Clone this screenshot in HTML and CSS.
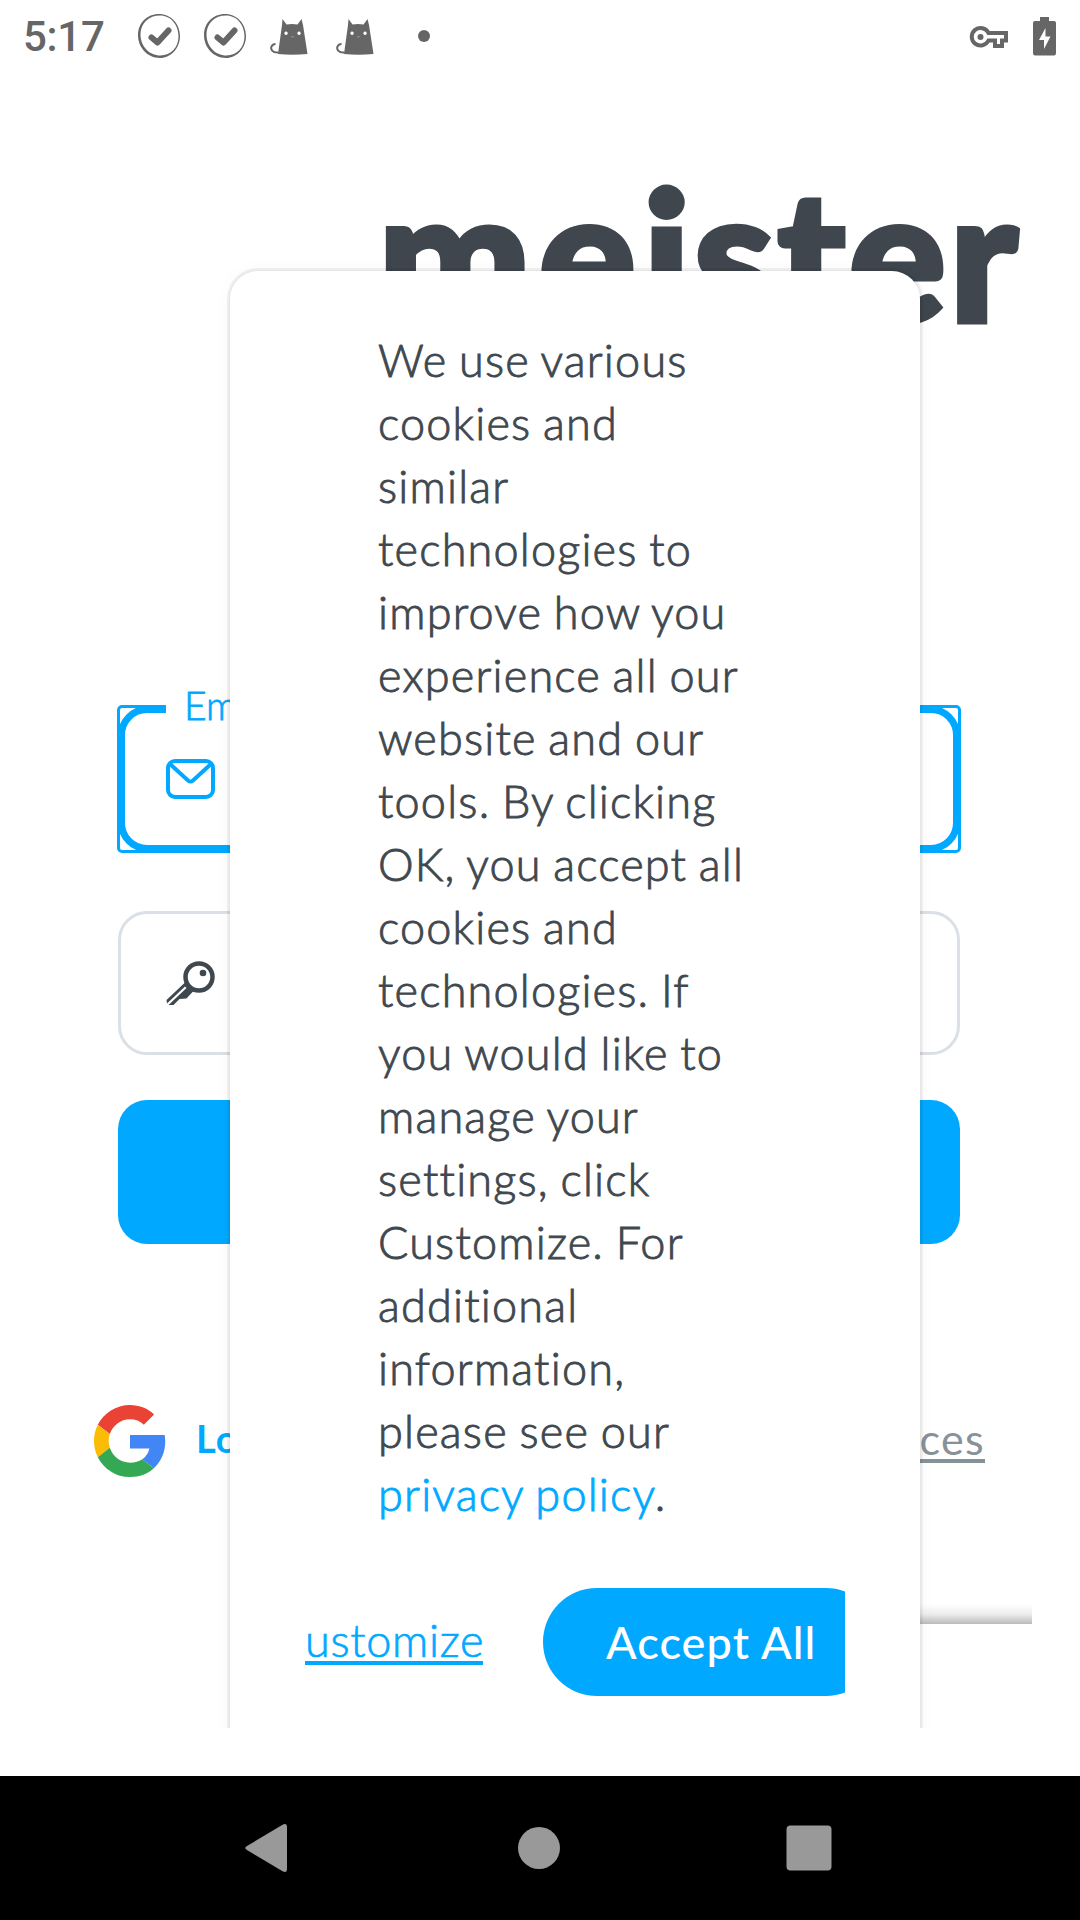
FILE: index.html
```html
<!DOCTYPE html>
<html lang="en">
<head>
<meta charset="utf-8">
<title>Meister login</title>
<link rel="stylesheet" href="styles.css">
</head>
<body>
<svg class="defs" width="0" height="0">
  <symbol id="check" viewBox="0 0 44 46">
    <path fill-rule="evenodd" d="M22 1C34 1 43 11 43 23S34 45 23 45C10 45 1 34 1 22 1 10 10 1 22 1ZM23 2.500C12 2.500 3.500 10 3.500 21.500 3.500 33 12 42.500 23.500 42.500 34 42.500 41.500 34 41.500 23.500 41.500 12 34 2.500 23 2.500Z"/>
    <path d="M14.500 24.500 20.500 29.500 31.500 17.500" fill="none" stroke="#666" stroke-width="6" stroke-linecap="round" stroke-linejoin="round"/>
  </symbol>
  <symbol id="cat" viewBox="0 0 38 37">
    <path fill-rule="evenodd" d="M12.500 1 16.500 6.500Q22 5.500 27.500 6.500L31.500 1 33 7 37.500 36Q22 37.500 8 36L12 7ZM16 13.500a1.700 1.700 0 1 0 .1 0ZM29 13.500a1.700 1.700 0 1 0 .1 0Z"/>
    <path d="M8.500 34.500C2 35 .5 31 1.500 28.500 2.500 26.500 4 26 5.500 26" fill="none" stroke="#666" stroke-width="2"/>
    <path d="M20.500 18.500h4l-2 1Z" fill="#aaa"/>
  </symbol>
</svg>

<header class="status">
  <span class="clock">5:17</span>
  <div class="notices">
    <svg class="check"><use href="#check"/></svg>
    <svg class="check"><use href="#check"/></svg>
    <svg class="cat"><use href="#cat"/></svg>
    <svg class="cat second"><use href="#cat"/></svg>
    <i class="dot"></i>
  </div>
  <svg class="vpn" viewBox="0 0 38 23"><path fill="none" stroke="#666" stroke-width="4" d="M18.500 7H36V14.500H32V20H25V14.500H18.500A8.800 8.800 0 1 1 18.500 7Z"/><circle cx="10.500" cy="11" r="3"/></svg>
  <svg class="battery" viewBox="0 0 23 39"><path fill-rule="evenodd" d="M7 0h9v4h5q2 0 2 2v30q0 2.500-2 2.500H2q-2 0-2-2.500V6q0-2 2-2h5ZM12.500 11 6 23h5v9l6.500-12.500h-5Z"/></svg>
</header>

<main class="page">
  <div class="brand"><span class="wide">me</span>ister</div>
  <form class="login">
    <div class="field email">
      <span class="label">Email</span>
      <svg class="icon" viewBox="0 0 49 40" fill="none" stroke="#00a9ff" stroke-width="4"><rect x="2" y="2" width="45" height="36" rx="7"/><path d="M4 5 22 21.500q2.500 2 5 0L45 5"/></svg>
    </div>
    <div class="field password">
      <svg class="icon key" viewBox="0 0 49 45"><circle cx="33" cy="16" r="13.500" fill="none" stroke="#3f484f" stroke-width="4.500"/><circle cx="37" cy="12" r="3.300"/><path d="M19 21.500 27.500 30 20.500 37.500 13.500 38 7.500 44H2.500L20.500 27 19 25.500 1 42.500.5 39Z"/></svg>
    </div>
    <div class="submit"></div>
  </form>
  <div class="social">
    <svg class="google" viewBox="0 0 48 48"><path fill="#ea4335" d="M24 9.500c3.540 0 6.710 1.220 9.210 3.600l6.850-6.850C35.900 2.380 30.470 0 24 0 14.620 0 6.510 5.380 2.560 13.220l7.980 6.190C12.430 13.720 17.740 9.500 24 9.500z"/><path fill="#4285f4" d="M47.500 24.550c0-1.570-.15-3.090-.38-4.550H24v9.020h12.940c-.58 2.960-2.260 5.480-4.780 7.180l7.730 6c4.510-4.180 7.610-10.360 7.610-17.650z"/><path fill="#fbbc05" d="M10.530 28.590A14.500 14.500 0 0 1 9.770 24c0-1.600.27-3.140.76-4.590l-7.980-6.190A23.900 23.900 0 0 0 0 24c0 3.880.92 7.540 2.560 10.780z"/><path fill="#34a853" d="M24 48c6.480 0 11.930-2.130 15.890-5.810l-7.730-6c-2.150 1.450-4.920 2.300-8.160 2.300-6.260 0-11.570-4.220-13.470-9.910l-7.980 6.190C6.510 42.620 14.620 48 24 48z"/></svg>
    <span class="google-login">Log in</span>
    <a class="services">services</a>
  </div>
  <div class="edge"></div>

  <div class="overlay">
    <section class="dialog">
      <p class="message">We use various<br>cookies and<br>similar<br>technologies to<br>improve how you<br>experience all our<br>website and our<br>tools. By clicking<br>OK, you accept all<br>cookies and<br>technologies. If<br>you would like to<br>manage your<br>settings, click<br>Customize. For<br>additional<br>information,<br>please see our<br><a>privacy policy</a>.</p>
      <div class="actions">
        <a class="customize">ustomize</a>
        <div class="accept">Accept All</div>
      </div>
    </section>
  </div>
</main>

<nav class="keys">
  <svg class="back" viewBox="0 0 60 60"><path d="M13 28 49 6.500Q53 5 53 9V51Q53 55 49 53.500L13 32Q9.500 30 13 28Z"/></svg>
  <svg viewBox="0 0 60 60"><circle cx="30" cy="30" r="21"/></svg>
  <svg viewBox="0 0 60 60"><rect x="7.500" y="7.500" width="45" height="45" rx="4"/></svg>
</nav>
</body>
</html>
```
FILE: styles.css
```css
* { box-sizing: border-box; }
body { margin: 0; width: 1080px; height: 1920px; display: flex; flex-direction: column; background: #fff; color: #3f484f; font-family: Lato, "Liberation Sans", sans-serif; overflow: hidden; }
.defs { display: none; }
svg { display: block; flex: none; overflow: visible; }

.status { height: 72px; display: flex; align-items: center; padding: 0 24px 0 23px; fill: #666; }
.clock { width: 114px; color: #666; font: 500 42px/72px Roboto, sans-serif; letter-spacing: -.3px; padding-top: 2px; }
.notices { display: flex; align-items: center; flex: 1; }
.check { width: 44px; height: 46px; margin-right: 22px; }
.cat { width: 38px; height: 37px; margin-left: 1px; }
.cat.second { margin-left: 28px; }
.dot { width: 12px; height: 12px; border-radius: 50%; background: #666; margin-left: 44px; }
.vpn { width: 38px; height: 23px; margin-right: 25px; margin-top: 2px; }
.battery { width: 23px; height: 39px; }

.page { position: relative; height: 1704px; display: flex; flex-direction: column; overflow: hidden; }
.brand { height: 335px; margin: 70px 0 0 378px; font-size: 182px; font-weight: 900; line-height: 219px; letter-spacing: 3.2px; color: #3f464e; -webkit-text-stroke: 5px #3f464e; }
.brand .wide { letter-spacing: 7px; }
.login { margin: 229px 120px 0 118px; display: flex; flex-direction: column; }
.field { height: 144px; border: 3px solid #dae0e5; border-radius: 29px; display: flex; align-items: center; padding-left: 45px; }
.field.email { position: relative; height: 146px; border: 7px solid #00a9ff; padding-left: 41px; }
.field.email::before { content: ""; position: absolute; inset: -8px; border: 3px solid #00a9ff; border-radius: 5px; }
.label { position: absolute; left: 41px; top: -33px; width: 200px; padding-left: 18px; background: #fff; color: #00a9ff; font-size: 39px; font-weight: 300; line-height: 50px; -webkit-text-stroke: .8px #00a9ff; }
.icon { width: 49px; height: 40px; }
.key { height: 45px; fill: #3f484f; }
.password { margin-top: 59px; }
.submit { height: 144px; margin-top: 45px; border-radius: 29px; background: #00a9ff; }
.social { height: 72px; margin: 161px 95px 0 94px; display: flex; align-items: center; }
.google { width: 72px; height: 72px; }
.google-login { margin: -6px 0 0 30px; flex: 1; color: #00a9ff; font-size: 38px; font-weight: 700; letter-spacing: 1px; }
.services { color: #879298; font-size: 43px; letter-spacing: 1.3px; border-bottom: 4px solid #879298; line-height: 40px; }
.edge { width: 150px; height: 20px; margin: 127px 0 0 882px; background: linear-gradient(rgba(0,0,0,0), rgba(0,0,0,.07) 50%, rgba(0,0,0,.27)); }

.overlay { position: absolute; left: 190px; top: 170px; width: 770px; height: 1486px; overflow: hidden; padding: 29px 40px 0; }
.dialog { height: 1560px; padding: 58px 75px 0; background: #fff; border-radius: 28px; box-shadow: 0 0 0 1px rgba(0,0,0,.03), 0 0 0 3px rgba(0,0,0,.055), 0 0 18px rgba(0,0,0,.04); }
.message { margin: 0; padding-left: 73px; font-size: 45px; font-weight: 300; line-height: 63px; white-space: nowrap; letter-spacing: 1.2px; word-spacing: -1.8px; -webkit-text-stroke: .9px currentColor; }
.message a { color: #00a9ff; }
.actions { margin-top: 62px; display: flex; overflow: hidden; height: 108px; align-items: center; }
.customize { color: #00a9ff; font-size: 45px; font-weight: 300; -webkit-text-stroke: .7px currentColor; letter-spacing: .7px; line-height: 42px; border-bottom: 4px solid #00a9ff; margin-right: 60px; width: 178px; white-space: nowrap; }
.accept { flex: none; width: 337px; height: 108px; border-radius: 54px; padding-left: 63px; background: #00a9ff; color: #fff; font-size: 45px; font-weight: 500; line-height: 108px; letter-spacing: 1.1px; }

.keys { height: 144px; display: flex; align-items: center; background: #000; padding-left: 234px; gap: 210px; fill: #999; }
.keys svg { width: 60px; height: 60px; }
.keys .back { margin-right: 5px; }
```
